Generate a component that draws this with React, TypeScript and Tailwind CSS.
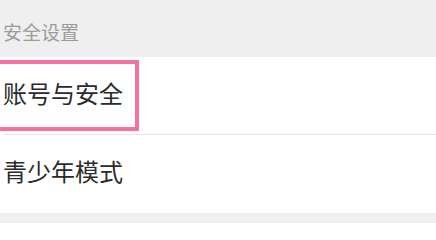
import React from "react";

const font = { fontFamily: '"Noto Sans CJK SC", "Noto Sans", sans-serif' };

export default function App() {
  return (
    <div className="w-[436px] h-[223px] overflow-hidden bg-[#efefef]" style={font}>
      {/* Section header */}
      <div className="h-[57px] flex items-center pl-[3px] pt-[8px] text-[19px] text-[#9b9b9b]">
        安全设置
      </div>

      {/* List */}
      <div className="bg-white">
        <div className="relative h-[77px] flex items-center pl-[3px] pb-[5px] text-[24px] text-[#2b2b2b]">
          账号与安全
          {/* highlight overlay */}
          <div className="absolute left-[-6px] top-[3px] w-[145px] h-[71px] border-[4px] border-[#f5739b] pointer-events-none" />
        </div>
        <div className="ml-[3px] h-px bg-[#e6e6e6]" />
        <div className="h-[78px] flex items-center pl-[3px] pb-[7px] text-[24px] text-[#2b2b2b]">
          青少年模式
        </div>
      </div>
    </div>
  );
}
